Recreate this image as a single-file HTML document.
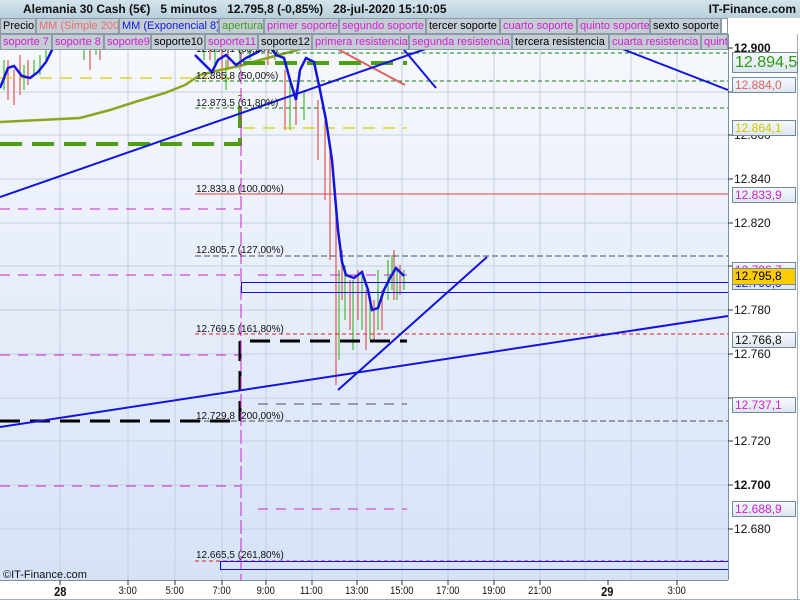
<!DOCTYPE html>
<html><head><meta charset="utf-8"><style>
*{margin:0;padding:0}
body{width:800px;height:600px;overflow:hidden;background:#fff;font-family:"Liberation Sans",sans-serif;position:relative}
.hdr{position:absolute;left:0;top:0;width:800px;height:18px;background:linear-gradient(#d4e4ee,#b8d0dc);font-weight:bold;font-size:12px;line-height:18px;color:#111}
.tabs{position:absolute;left:0;height:15px;font-size:11px;line-height:14px;white-space:nowrap}
.tabs span{position:absolute;top:0;height:14px;background:#c4ccd4;border:1px solid #8a9aa6;box-sizing:border-box;height:16px;padding-left:2px;overflow:hidden}
.ax{position:absolute;font-size:12px;color:#111}
.box{position:absolute;left:732px;width:64px;height:16px;border:1px solid #708898;background:linear-gradient(#f6f9fc,#dde6f0);font-size:12px;line-height:15px;padding-left:2px;box-sizing:border-box}
.tl{position:absolute;top:585px;font-size:11px;color:#111;transform:scaleX(.85)}
</style></head><body>
<svg width="800" height="600" style="position:absolute;left:0;top:0">
<defs><linearGradient id="bg" x1="0" y1="0" x2="0" y2="1"><stop offset="0" stop-color="#f7f9fd"/><stop offset="1" stop-color="#d6e2f8"/></linearGradient></defs>
<rect x="0" y="18" width="728" height="562" fill="url(#bg)"/>
<g stroke="#c6cfdf" stroke-width="1">
<line x1="60" y1="18" x2="60" y2="580"/><line x1="128" y1="18" x2="128" y2="580"/><line x1="175" y1="18" x2="175" y2="580"/><line x1="222" y1="18" x2="222" y2="580"/><line x1="266" y1="18" x2="266" y2="580"/><line x1="312" y1="18" x2="312" y2="580"/><line x1="357" y1="18" x2="357" y2="580"/><line x1="402" y1="18" x2="402" y2="580"/><line x1="448" y1="18" x2="448" y2="580"/><line x1="494" y1="18" x2="494" y2="580"/><line x1="540" y1="18" x2="540" y2="580"/><line x1="585" y1="18" x2="585" y2="580"/><line x1="631" y1="18" x2="631" y2="580"/><line x1="677" y1="18" x2="677" y2="580"/>
<line x1="0" y1="48" x2="728" y2="48"/><line x1="0" y1="92" x2="728" y2="92"/><line x1="0" y1="135" x2="728" y2="135"/><line x1="0" y1="179" x2="728" y2="179"/><line x1="0" y1="223" x2="728" y2="223"/><line x1="0" y1="266" x2="728" y2="266"/><line x1="0" y1="310" x2="728" y2="310"/><line x1="0" y1="354" x2="728" y2="354"/><line x1="0" y1="398" x2="728" y2="398"/><line x1="0" y1="441" x2="728" y2="441"/><line x1="0" y1="485" x2="728" y2="485"/><line x1="0" y1="529" x2="728" y2="529"/>
</g>
<!-- candles -->
<g stroke-width="1.3">
<path stroke="#e06060" d="M8 60V100M14 70V105M20 55V95M28 60V85M90 40V70M100 40V60M210 40V60M222 40V80M228 50V70M268 40V65M285 70V130M296 90V125M318 100V160M325 120V200M330 150V260M336 200V385M342 250V300M350 280V330M358 270V320M366 290V350M374 300V340M382 290V330M394 250V300M400 265V295"/>
<path stroke="#4cc040" d="M4 60V90M24 65V90M34 60V75M40 55V75M46 45V60M84 40V60M96 40V55M204 40V60M215 45V65M226 60V90M240 50V70M250 40V60M275 40V60M290 80V130M304 90V120M339 270V360M345 265V320M353 280V350M362 275V330M370 300V340M378 270V330M388 260V300M392 255V290M397 270V300M404 270V290"/>
</g>
<!-- SMA 200 -->
<path fill="none" stroke="#8aa620" stroke-width="2.5" d="M0 122L40 120L80 118L110 110L135 102L165 93L185 85L200 75L220 70L240 66L260 60L290 52L320 44L350 38"/>
<!-- horizontal levels -->
<g fill="none">
<line x1="0" y1="78" x2="240" y2="78" stroke="#d8d000" stroke-width="1.2" stroke-dasharray="12,8"/>
<line x1="243" y1="128" x2="407" y2="128" stroke="#d8d000" stroke-width="1.2" stroke-dasharray="12,8"/>
<line x1="240" y1="53" x2="728" y2="53" stroke="#108010" stroke-dasharray="4,3"/>
<line x1="195" y1="81" x2="728" y2="81" stroke="#108010" stroke-dasharray="4,3"/>
<line x1="195" y1="108" x2="728" y2="108" stroke="#108010" stroke-dasharray="4,3"/>
<line x1="195" y1="194" x2="728" y2="194" stroke="#e04040"/>
<line x1="195" y1="256" x2="728" y2="256" stroke="#505050" stroke-dasharray="6,3"/>
<line x1="195" y1="334" x2="728" y2="334" stroke="#e02020" stroke-dasharray="4,3"/>
<line x1="195" y1="421" x2="728" y2="421" stroke="#505050" stroke-dasharray="6,3"/>
<line x1="195" y1="561" x2="728" y2="561" stroke="#e02020" stroke-dasharray="4,3"/>
<path d="M0 144H240V95M243 63H407" stroke="#4ca010" stroke-width="4" stroke-dasharray="22,10"/>
<path d="M0 209H240M0 275H240M258 275H407M0 355H240M0 486H240M258 509H407" stroke="#d020d0" stroke-dasharray="10,8"/>
<line x1="258" y1="404" x2="407" y2="404" stroke="#505050" stroke-dasharray="10,8"/>
<path d="M0 421H240V341H407" stroke="#000" stroke-width="3" stroke-dasharray="20,10"/>
<line x1="241" y1="34" x2="241" y2="580" stroke="#d020d0" stroke-dasharray="14,4"/>
<rect x="241.5" y="282.5" width="487" height="10" stroke="#1010e0"/>
<rect x="220.5" y="561.5" width="508" height="8" stroke="#1010e0"/>
<line x1="330" y1="45" x2="405" y2="85" stroke="#e06060" stroke-width="2"/>
</g>
<g stroke="#1414e0" stroke-width="2" fill="none">
<line x1="0" y1="197" x2="440" y2="44"/>
<line x1="0" y1="427" x2="728" y2="316"/>
<line x1="338" y1="390" x2="487" y2="257"/>
<line x1="400" y1="45" x2="436" y2="88"/>
<line x1="612" y1="45" x2="728" y2="90"/>
<path stroke-width="2.5" d="M0 88L8 68L14 66L22 76L30 78L38 72L46 62L52 50L58 40M195 55L205 65L212 72L218 60L226 55L236 65L246 58L258 52L268 44L276 55L284 58L290 80L296 100L300 70L306 58L314 62L320 90L326 120L332 160L338 230L342 262L346 275L354 278L362 272L368 290L372 310L378 308L384 290L390 278L396 268L404 276"/>
</g>
<!-- level texts -->
<g font-family="Liberation Sans" font-size="10" fill="#111">
<text x="196" y="52">12.896,1 (38,20%)</text>
<text x="196" y="79">12.885,8 (50,00%)</text>
<text x="196" y="106">12.873,5 (61,80%)</text>
<text x="196" y="192">12.833,8 (100,00%)</text>
<text x="196" y="253">12.805,7 (127,00%)</text>
<text x="196" y="332">12.769,5 (161,80%)</text>
<text x="196" y="419">12.729,8 (200,00%)</text>
<text x="196" y="558">12.665,5 (261,80%)</text>
<text x="3" y="578" font-size="11">©IT-Finance.com</text>
</g>
<!-- axes frames -->
<line x1="728.5" y1="34" x2="728.5" y2="580" stroke="#7890a0"/>
<line x1="0" y1="580.5" x2="728" y2="580.5" stroke="#7890a0"/>
<line x1="797.5" y1="34" x2="797.5" y2="600" stroke="#a0b0bc"/>
<line x1="0" y1="599.5" x2="800" y2="599.5" stroke="#a0b0bc"/>
<g stroke="#333"><path d="M728 48h5M728 92h5M728 135h5M728 179h5M728 223h5M728 266h5M728 310h5M728 354h5M728 398h5M728 441h5M728 485h5M728 529h5M60 580v5M128 580v5M175 580v5M222 580v5M266 580v5M312 580v5M357 580v5M402 580v5M448 580v5M494 580v5M540 580v5M608 580v5M677 580v5"/></g>
<!-- icon -->
<rect x="4" y="9" width="5" height="7" fill="#e05050" stroke="#600" stroke-width=".6"/><line x1="6.5" y1="7" x2="6.5" y2="18" stroke="#600"/>
<rect x="12" y="4" width="5" height="10" fill="#40d040" stroke="#060" stroke-width=".6"/><line x1="14.5" y1="2" x2="14.5" y2="16" stroke="#060"/>
</svg>
<div class="hdr"><span style="position:absolute;left:23px">Alemania 30 Cash (5€)&nbsp;&nbsp;&nbsp;5 minutos&nbsp;&nbsp;&nbsp;12.795,8 (-0,85%)&nbsp;&nbsp;&nbsp;28-jul-2020 15:10:05</span><span style="position:absolute;right:4px">IT-Finance.com</span></div>
<div class="tabs" style="top:18px">
<span style="left:0;width:36px;color:#000">Precio</span>
<span style="left:36px;width:83px;color:#e87070">MM (Simple 200)</span>
<span style="left:119px;width:100px;color:#1020e0">MM (Exponencial 8)</span>
<span style="left:219px;width:45px;color:#40a020">apertura</span>
<span style="left:264px;width:75px;color:#d020d0">primer soporte</span>
<span style="left:339px;width:87px;color:#d020d0">segundo soporte</span>
<span style="left:426px;width:74px;color:#000">tercer soporte</span>
<span style="left:500px;width:77px;color:#d020d0">cuarto soporte</span>
<span style="left:577px;width:73px;color:#d020d0">quinto soporte</span>
<span style="left:650px;width:71px;color:#000">sexto soporte</span>
<span style="left:721px;width:7px;background:#fff"></span>
</div>
<div class="tabs" style="top:34px">
<span style="left:0;width:52px;color:#d020d0">soporte 7</span>
<span style="left:52px;width:52px;color:#d020d0">soporte 8</span>
<span style="left:104px;width:47px;color:#d020d0">soporte9</span>
<span style="left:151px;width:54px;color:#000">soporte10</span>
<span style="left:205px;width:53px;color:#d020d0">soporte11</span>
<span style="left:258px;width:54px;color:#000">soporte12</span>
<span style="left:312px;width:97px;color:#d020d0">primera resistencia</span>
<span style="left:409px;width:103px;color:#d020d0">segunda resistencia</span>
<span style="left:512px;width:97px;color:#000">tercera resistencia</span>
<span style="left:609px;width:92px;color:#d020d0">cuarta resistencia</span>
<span style="left:701px;width:27px;color:#d020d0">quinta</span>
</div>
<div class="ax" style="left:734px;top:41px;font-weight:bold">12.900</div>
<div class="ax" style="left:734px;top:128px">12.860</div>
<div class="ax" style="left:734px;top:172px">12.840</div>
<div class="ax" style="left:734px;top:216px">12.820</div>
<div class="ax" style="left:734px;top:303px">12.780</div>
<div class="ax" style="left:734px;top:347px">12.760</div>
<div class="ax" style="left:734px;top:434px">12.720</div>
<div class="ax" style="left:734px;top:478px;font-weight:bold">12.700</div>
<div class="ax" style="left:734px;top:522px">12.680</div>
<div class="box" style="top:52px;height:21px;font-size:16px;line-height:20px;color:#2a9a10;width:66px">12.894,5</div>
<div class="box" style="top:77px;color:#e06060">12.884,0</div>
<div class="box" style="top:120px;color:#d0c800">12.864,1</div>
<div class="box" style="top:187px;color:#d020d0">12.833,9</div>
<div class="box" style="top:262px;color:#d020d0;height:10px;overflow:hidden">12.796,7</div>
<div class="box" style="top:278px;color:#2020e0;height:12px;line-height:8px;overflow:hidden">12.793,3</div>
<div class="box" style="top:268px;background:#ffcc00;color:#000;height:17px">12.795,8</div>
<div class="box" style="top:332px;color:#111">12.766,8</div>
<div class="box" style="top:397px;color:#d020d0">12.737,1</div>
<div class="box" style="top:501px;color:#d020d0">12.688,9</div>
<div class="tl" style="left:53px;font-weight:bold;font-size:13px;top:584px">28</div>
<div class="tl" style="left:117px">3:00</div>
<div class="tl" style="left:164px">5:00</div>
<div class="tl" style="left:211px">7:00</div>
<div class="tl" style="left:255px">9:00</div>
<div class="tl" style="left:298px">11:00</div>
<div class="tl" style="left:343px">13:00</div>
<div class="tl" style="left:388px">15:00</div>
<div class="tl" style="left:434px">17:00</div>
<div class="tl" style="left:480px">19:00</div>
<div class="tl" style="left:526px">21:00</div>
<div class="tl" style="left:600px;font-weight:bold;font-size:13px;top:584px">29</div>
<div class="tl" style="left:666px">3:00</div>
</body></html>
